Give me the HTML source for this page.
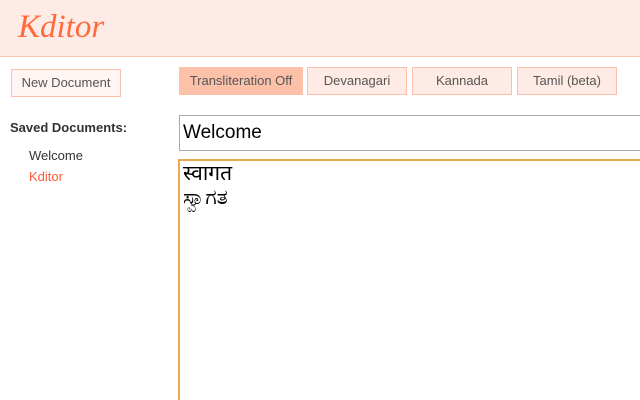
<!DOCTYPE html><html style="overflow:hidden;height:400px"><head><style>
body{margin:0;width:640px;height:400px;overflow:hidden;background:#fff;font-family:"Liberation Sans",sans-serif;position:relative}
.hd{position:absolute;left:0;top:0;width:640px;height:56px;background:#ffebe5;border-bottom:1px solid #fcc6b4}
.logo{position:absolute;left:18px;top:9px;font:italic 33px "Liberation Serif",serif;color:#ff6a3d}
.b{position:absolute;box-sizing:border-box;border:1px solid #fcc0aa;background:#ffebe5;color:#555;font-size:13px;text-align:center;line-height:26px}
.ab{position:absolute}
</style></head><body>
<div class="hd"><div class="logo">Kditor</div></div>
<div class="b" style="left:11px;top:69px;width:110px;height:28px;background:#fff5f2">New Document</div>
<div class="b" style="left:179px;top:67px;width:124px;height:28px;background:#fdc1aa;border-color:#fdc1aa">Transliteration Off</div>
<div class="b" style="left:307px;top:67px;width:100px;height:28px">Devanagari</div>
<div class="b" style="left:412px;top:67px;width:100px;height:28px">Kannada</div>
<div class="b" style="left:517px;top:67px;width:100px;height:28px">Tamil (beta)</div>
<div class="ab" style="left:10px;top:120px;font-size:13px;font-weight:bold;color:#333">Saved Documents:</div>
<div class="ab" style="left:29px;top:148px;font-size:13px;color:#333">Welcome</div>
<div class="ab" style="left:29px;top:169px;font-size:13px;color:#ff5a36">Kditor</div>
<div class="ab" style="left:179px;top:115px;width:470px;height:36px;box-sizing:border-box;border:1px solid #aaa;font-size:19px;line-height:34px;padding-left:3px;color:#000">Welcome</div>
<div class="ab" style="left:178px;top:159px;width:480px;height:241px;box-sizing:border-box;border:2px solid #eaa950;border-bottom:none;padding:1px 3px;font-size:21px;line-height:24px;font-family:'Liberation Sans','DejaVu Sans',sans-serif">स्वागत<br>ಸ್ವಾಗತ</div>
</body></html>
